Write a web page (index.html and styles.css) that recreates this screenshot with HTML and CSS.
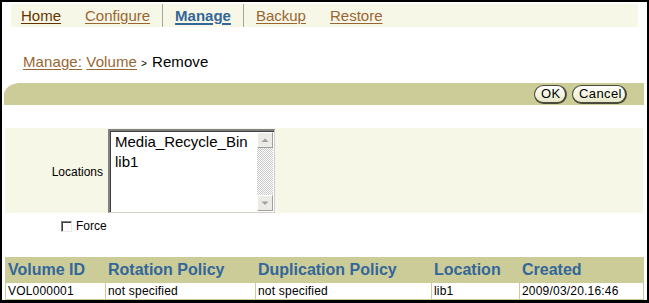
FILE: index.html
```html
<!DOCTYPE html>
<html>
<head>
<meta charset="utf-8">
<title>Manage Volume - Remove</title>
<link rel="stylesheet" href="styles.css">
</head>
<body>
<div class="frame">
  <nav class="tabs">
    <a class="tab tab-home" href="#">Home</a>
    <a class="tab" href="#">Configure</a>
    <span class="tab-sep"></span>
    <a class="tab tab-active" href="#">Manage</a>
    <span class="tab-sep"></span>
    <a class="tab" href="#">Backup</a>
    <a class="tab" href="#">Restore</a>
  </nav>

  <div class="crumbs">
    <a href="#">Manage:</a> <a href="#">Volume</a><span class="crumb-sep">&gt;</span><span class="crumb-current">Remove</span>
  </div>

  <div class="actionbar">
    <button class="pill">OK</button>
    <button class="pill">Cancel</button>
  </div>

  <div class="formrow">
    <div class="label">Locations</div>
    <div class="listbox">
      <div class="list-items">
        <div>Media_Recycle_Bin</div>
        <div>lib1</div>
      </div>
      <div class="scrollbar">
        <div class="sb-btn">
          <svg width="12" height="12" viewBox="0 0 12 12"><polygon points="2.5,8 6,4.5 9.5,8" fill="#a0a0a0"/></svg>
        </div>
        <div class="sb-track"></div>
        <div class="sb-btn">
          <svg width="12" height="12" viewBox="0 0 12 12"><polygon points="2.5,4.5 6,8 9.5,4.5" fill="#a0a0a0"/></svg>
        </div>
      </div>
    </div>
  </div>

  <div class="force">
    <span class="checkbox"></span>
    <span class="force-label">Force</span>
  </div>

  <table class="grid">
    <colgroup>
      <col class="c1"><col class="c2"><col class="c3"><col class="c4"><col class="c5">
    </colgroup>
    <thead>
      <tr>
        <th>Volume ID</th>
        <th>Rotation Policy</th>
        <th>Duplication Policy</th>
        <th>Location</th>
        <th>Created</th>
      </tr>
    </thead>
    <tbody>
      <tr>
        <td>VOL000001</td>
        <td>not specified</td>
        <td>not specified</td>
        <td>lib1</td>
        <td>2009/03/20.16:46</td>
      </tr>
    </tbody>
  </table>
</div>
</body>
</html>
```

FILE: styles.css
```css
html, body {
  margin: 0;
  padding: 0;
  background: #ffffff;
}

.frame {
  box-sizing: border-box;
  width: 649px;
  height: 303px;
  border: 2px solid #000;
  border-bottom-width: 3px;
  font-family: "Liberation Sans", Arial, sans-serif;
  display: flex;
  flex-direction: column;
  align-items: flex-start;
  overflow: hidden;
}

/* Tabs */
.tabs {
  margin: 2px 0 0 9px;
  width: 627px;
  height: 23px;
  background: #f7f7e7;
  display: flex;
  align-items: stretch;
}

.tab {
  padding: 0 12px;
  font-size: 15px;
  line-height: 23px;
  color: #996633;
  text-decoration: underline;
  text-underline-offset: 2px;
}

.tab-home {
  padding-left: 10px;
  color: #663300;
}

.tab-active {
  color: #336699;
  font-weight: bold;
  text-decoration-thickness: 2px;
}

.tab-sep {
  width: 1px;
  background: #a6a69a;
}

/* Breadcrumb */
.crumbs {
  margin: 26px 0 0 21px;
  height: 18px;
  font-size: 15px;
  line-height: 18px;
  white-space: nowrap;
  letter-spacing: 0.1px;
}

.crumbs a {
  color: #996633;
  text-decoration: underline;
  text-underline-offset: 2px;
}

.crumb-sep {
  font-size: 10px;
  margin: 0 5px 0 4px;
  color: #000;
}

.crumb-current {
  color: #000;
}

/* Olive action bar */
.actionbar {
  margin: 12px 0 0 2px;
  box-sizing: border-box;
  width: 640px;
  height: 23px;
  background: #cccc99;
  border-top-left-radius: 16px 12px;
  display: flex;
  justify-content: flex-end;
  align-items: center;
  gap: 5px;
  padding-right: 17px;
}

.pill {
  box-sizing: border-box;
  height: 19px;
  padding: 0 6px;
  font-family: "Liberation Sans", Arial, sans-serif;
  font-size: 13px;
  line-height: 15px;
  color: #000;
  background: linear-gradient(#ffffff, #f3f3de 60%, #e6e6c8);
  border: 1px solid #4a4a3a;
  border-right-width: 2px;
  border-bottom-width: 2px;
  border-radius: 10px;
  letter-spacing: 0.4px;
}

.pill:first-child {
  width: 33px;
}

.pill:last-child {
  width: 55px;
}

/* Form row */
.formrow {
  margin: 23px 0 0 3px;
  box-sizing: border-box;
  width: 638px;
  height: 85px;
  padding-top: 1px;
  background: #f7f7e7;
  display: flex;
  align-items: flex-start;
}

.label {
  box-sizing: border-box;
  width: 98px;
  height: 84px;
  padding-top: 3px;
  line-height: 81px;
  text-align: right;
  font-size: 12px;
  color: #000;
}

.listbox {
  margin-left: 5px;
  box-sizing: border-box;
  width: 167px;
  height: 84px;
  background: #fff;
  border-top: 2px solid #808080;
  border-left: 2px solid #808080;
  border-right: 1px solid #d4d0c8;
  border-bottom: 1px solid #d4d0c8;
  box-shadow: inset 1px 1px 0 #404040;
  display: flex;
}

.list-items {
  flex: 1;
  padding: 1px 0 0 5px;
  font-size: 15px;
  line-height: 20px;
  color: #000;
  white-space: nowrap;
  overflow: hidden;
}

.scrollbar {
  width: 16px;
  margin: 1px 1px 1px 0;
  display: flex;
  flex-direction: column;
}

.sb-btn {
  box-sizing: border-box;
  width: 16px;
  height: 16px;
  background: #ecebe6;
  border-top: 1px solid #fff;
  border-left: 1px solid #fff;
  border-right: 1px solid #a0a0a0;
  border-bottom: 1px solid #a0a0a0;
  display: flex;
  align-items: center;
  justify-content: center;
}

.sb-track {
  flex: 1;
  background-color: #fff;
  background-image: conic-gradient(#c8c8c8 25%, #ffffff 0 50%, #c8c8c8 0 75%, #ffffff 0);
  background-size: 2px 2px;
}

/* Force checkbox */
.force {
  margin: 5px 0 0 59px;
  height: 16px;
  display: flex;
  align-items: center;
  gap: 4px;
}

.checkbox {
  box-sizing: border-box;
  width: 11px;
  height: 11px;
  background: #fff;
  border-top: 1px solid #808080;
  border-left: 1px solid #808080;
  border-right: 1px solid #e8e8e8;
  border-bottom: 1px solid #e8e8e8;
  box-shadow: inset 1px 1px 0 #404040;
}

.force-label {
  font-size: 12px;
  color: #000;
}

/* Results table */
.grid {
  margin: 23px 0 0 3px;
  width: 638px;
  border-collapse: collapse;
  table-layout: fixed;
}

.c1 { width: 100px; }
.c2 { width: 150px; }
.c3 { width: 176px; }
.c4 { width: 88px; }
.c5 { width: 124px; }

.grid th {
  height: 24px;
  padding: 0 0 0 2px;
  background: #cccc99;
  color: #336699;
  font-size: 16px;
  font-weight: bold;
  text-align: left;
  white-space: nowrap;
  border: 1px solid #cccc99;
}

.grid td {
  height: 16px;
  padding: 0 0 0 2px;
  font-size: 12px;
  line-height: 16px;
  color: #000;
  background: #fff;
  border: 1px solid #cccc99;
  white-space: nowrap;
  letter-spacing: 0.2px;
}
```
